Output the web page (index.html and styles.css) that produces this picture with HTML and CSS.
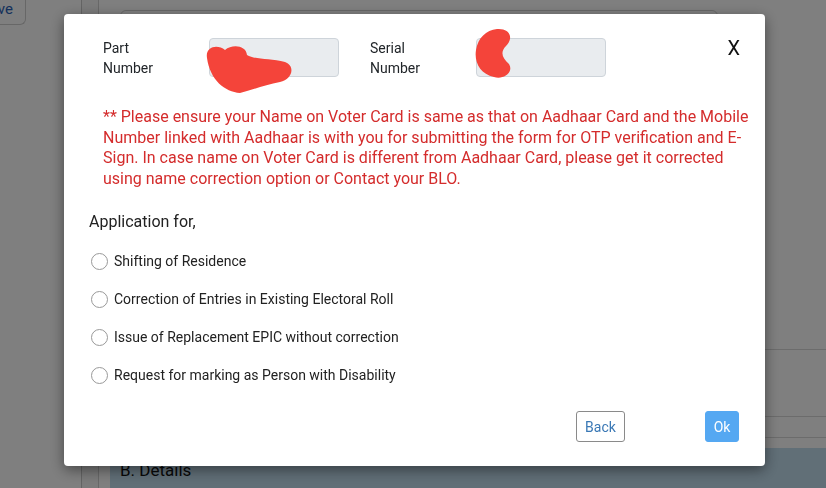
FILE: index.html
```html
<!DOCTYPE html>
<html lang="en">
<head>
<meta charset="utf-8">
<title>Application</title>
<link rel="stylesheet" href="styles.css">
</head>
<body>
<div class="page">
  <aside class="sidebar">
    <button class="save-btn">Save</button>
  </aside>
  <div class="rail"></div>
  <main class="main">
    <div class="top-box"></div>
    <div class="row row-a"></div>
    <div class="row row-b"></div>
    <div class="row row-c"></div>
    <div class="section-head">B. Details</div>
  </main>
</div>

<div class="overlay">
  <div class="modal">
    <div class="field-row">
      <label class="field-label">Part<br>Number</label>
      <div class="field-input"></div>
      <label class="field-label">Serial<br>Number</label>
      <div class="field-input"></div>
      <span class="close">X</span>
    </div>
    <p class="notice">** Please ensure your Name on Voter Card is same as that on Aadhaar Card and the Mobile Number linked with Aadhaar is with you for submitting the form for OTP verification and E-Sign. In case name on Voter Card is different from Aadhaar Card, please get it corrected using name correction option or Contact your BLO.</p>
    <div class="app-title">Application for,</div>
    <ul class="options">
      <li><span class="radio"></span>Shifting of Residence</li>
      <li><span class="radio"></span>Correction of Entries in Existing Electoral Roll</li>
      <li><span class="radio"></span>Issue of Replacement EPIC without correction</li>
      <li><span class="radio"></span>Request for marking as Person with Disability</li>
    </ul>
    <div class="actions">
      <button class="btn btn-back">Back</button>
      <button class="btn btn-ok">Ok</button>
    </div>
    <svg class="scribble" width="700" height="452" viewBox="0 0 700 452">
      <g fill="#f4443a">
        <path d="M143,44 C141,32 154,30 161,36 C168,30 182,31 183,41 C191,46 206,44 221,48 C232,52 228,66 216,68 C201,71 188,76 176,79 C161,78 146,66 143,44 Z"/>
        <path d="M433,15 C446,14 450,24 442,32 C436,38 438,44 445,50 C450,58 440,66 430,63 C416,60 410,48 412,36 C414,24 422,16 433,15 Z"/>
      </g>
    </svg>
  </div>
</div>
</body>
</html>
```

FILE: styles.css
```css
* { box-sizing: border-box; }

html, body {
  margin: 0;
  padding: 0;
  width: 826px;
  height: 488px;
  overflow: hidden;
  font-family: Roboto, "Liberation Sans", Arial, sans-serif;
  background: #ffffff;
}

.page {
  display: flex;
  width: 826px;
  height: 488px;
}

.sidebar {
  width: 82px;
  flex: none;
  border-right: 1px solid #c8c8c8;
}

.save-btn {
  display: block;
  margin-left: -22px;
  width: 48px;
  height: 25px;
  border: 1px solid #cfcfcf;
  border-top: none;
  border-radius: 0 0 6px 6px;
  background: #fff;
  color: #2a63b8;
  font: 15px Roboto, sans-serif;
  text-align: right;
  padding: 0 12px 6px 0;
}

.rail {
  width: 17px;
  flex: none;
  border-right: 1px solid #d0d0d0;
  background: #f6f6f6;
}

.main {
  flex: 1;
  display: flex;
  flex-direction: column;
  padding-left: 11px;
  background: #fff;
}

.top-box {
  margin: 10px 0 0 10px;
  width: 598px;
  height: 320px;
  border: 1px solid #cfcfcf;
  border-radius: 6px;
  flex: none;
}

.row { flex: none; border-bottom: 1px solid #d8d8d8; }
.row-a { height: 20px; }
.row-b { height: 67px; }
.row-c { height: 21px; margin-bottom: 10px; }

.section-head {
  flex: none;
  height: 40px;
  background: #c2deef;
  color: #111;
  font-size: 17px;
  padding: 12px 0 0 10px;
}

.overlay {
  position: fixed;
  inset: 0;
  background: rgba(0, 0, 0, 0.5);
  padding: 14px 0 0 64px;
}

.modal {
  position: relative;
  width: 701px;
  height: 452px;
  background: #fff;
  border-radius: 4px;
  box-shadow: 0 4px 14px rgba(0, 0, 0, 0.45);
  padding: 24px 12px 0 25px;
}

.field-row {
  display: flex;
  align-items: center;
  padding-left: 14px;
  padding-right: 13px;
  height: 39px;
}

.field-label {
  width: 106px;
  font-size: 14px;
  line-height: 20px;
  color: #212529;
}

.field-input {
  width: 130px;
  height: 39px;
  background: #e9ecef;
  border: 1px solid #ced4da;
  border-radius: 4px;
  margin-right: 31px;
}

.close {
  margin-left: auto;
  font-size: 20px;
  line-height: 20px;
  color: #111;
  align-self: flex-start;
  padding-top: 0;
}

.notice {
  margin: 30px 0 0 14px;
  color: #d42c2c;
  font-size: 16px;
  line-height: 20.6px;
}

.app-title {
  margin-top: 21px;
  font-size: 16px;
  color: #222;
  line-height: 24px;
}

.options {
  list-style: none;
  margin: 8px 0 0 0;
  padding: 0;
}

.options li {
  display: flex;
  align-items: center;
  height: 38px;
  font-size: 14px;
  color: #222;
}

.radio {
  width: 17px;
  height: 17px;
  border: 1.5px solid #999;
  border-radius: 50%;
  margin: 0 6px 0 2px;
  flex: none;
}

.actions {
  display: flex;
  justify-content: flex-end;
  margin-top: 17px;
  padding-right: 14px;
}

.btn {
  height: 31px;
  font: 14px Roboto, sans-serif;
  border-radius: 3px;
  padding: 0;
}

.btn-back {
  width: 49px;
  background: #fff;
  border: 1px solid #8a8a8a;
  color: #3a78b5;
  margin-right: 80px;
}

.btn-ok {
  width: 34px;
  background: #55a8f2;
  border: 1px solid #55a8f2;
  color: #fff;
}

.scribble {
  position: absolute;
  left: 0;
  top: 0;
  pointer-events: none;
}
```
